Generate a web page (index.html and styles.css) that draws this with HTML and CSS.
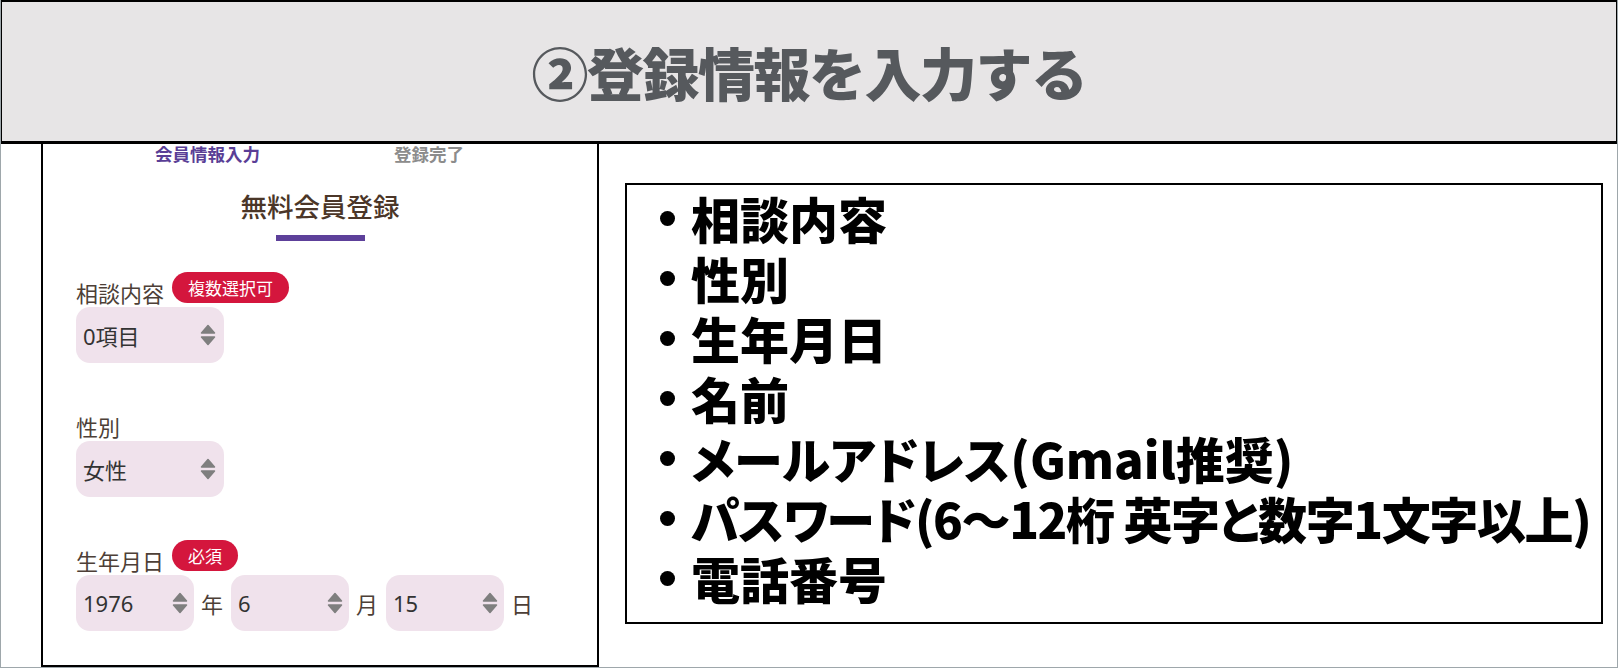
FILE: index.html
```html
<!DOCTYPE html>
<html lang="ja">
<head>
<meta charset="utf-8">
<title>登録情報を入力する</title>
<link rel="stylesheet" href="styles.css">
</head>
<body>
<div class="page">
  <header class="banner"><h1 class="banner-title">②登録情報を入力する</h1></header>
  <div class="content">
    <section class="phone">
      <div class="steps">
        <span class="step step-active">会員情報入力</span>
        <span class="step">登録完了</span>
      </div>
      <h2 class="title">無料会員登録</h2>
      <div class="title-bar"></div>
      <div class="fields">
        <div class="field">
          <div class="label-row"><span class="label">相談内容</span><span class="badge">複数選択可</span></div>
          <div class="select"><span>0項目</span><svg class="updown" width="16" height="22" viewBox="0 0 16 22"><path d="M8 1.5 L14.5 9 H1.5 Z M1.5 13 H14.5 L8 20.5 Z"/></svg></div>
        </div>
        <div class="field">
          <div class="label-row"><span class="label">性別</span></div>
          <div class="select"><span>女性</span><svg class="updown" width="16" height="22" viewBox="0 0 16 22"><path d="M8 1.5 L14.5 9 H1.5 Z M1.5 13 H14.5 L8 20.5 Z"/></svg></div>
        </div>
        <div class="field">
          <div class="label-row"><span class="label">生年月日</span><span class="badge">必須</span></div>
          <div class="date-row">
            <div class="select select-date"><span>1976</span><svg class="updown" width="16" height="22" viewBox="0 0 16 22"><path d="M8 1.5 L14.5 9 H1.5 Z M1.5 13 H14.5 L8 20.5 Z"/></svg></div>
            <span class="unit">年</span>
            <div class="select select-date"><span>6</span><svg class="updown" width="16" height="22" viewBox="0 0 16 22"><path d="M8 1.5 L14.5 9 H1.5 Z M1.5 13 H14.5 L8 20.5 Z"/></svg></div>
            <span class="unit">月</span>
            <div class="select select-date"><span>15</span><svg class="updown" width="16" height="22" viewBox="0 0 16 22"><path d="M8 1.5 L14.5 9 H1.5 Z M1.5 13 H14.5 L8 20.5 Z"/></svg></div>
            <span class="unit">日</span>
          </div>
        </div>
      </div>
    </section>
    <section class="summary">
      <ul class="items">
        <li>相談内容</li>
        <li>性別</li>
        <li>生年月日</li>
        <li>名前</li>
        <li>メールアドレス(Gmail推奨)</li>
        <li class="tight">パスワード(6〜12桁 英字と数字1文字以上)</li>
        <li>電話番号</li>
      </ul>
    </section>
  </div>
</div>
</body>
</html>
```
FILE: styles.css
```css
html, body {
  margin: 0;
  padding: 0;
  background: #ffffff;
}
body {
  font-family: "Noto Sans CJK JP", "Noto Sans", sans-serif;
}
.page {
  width: 1618px;
  height: 668px;
  box-sizing: border-box;
  border: 1px solid #9ea7ab;
  border-top: none;
  display: flex;
  flex-direction: column;
  overflow: hidden;
}
.banner {
  margin: 0 -1px;
  height: 144px;
  flex: 0 0 144px;
  box-sizing: border-box;
  border: 2px solid #000;
  border-bottom-width: 3px;
  background: #e7e5e6;
  display: flex;
  align-items: center;
  justify-content: center;
}
.banner-title {
  margin: 0;
  font-size: 57px;
  line-height: 1;
  font-weight: 900;
  color: #56595d;
  letter-spacing: -1.5px;
}
.content {
  flex: 1;
  display: flex;
  align-items: flex-start;
  min-height: 0;
}
.phone {
  margin-left: 40px;
  width: 558px;
  align-self: stretch;
  box-sizing: border-box;
  border: 2px solid #000;
  border-top: none;
}
.steps {
  display: flex;
  padding-left: 112px;
  gap: 134px;
  font-size: 17.5px;
  line-height: 20px;
  font-weight: 700;
  color: #8c8c8c;
}
.step-active {
  color: #5a3e96;
}
.title {
  margin: 26px 0 0;
  text-align: center;
  font-size: 26.5px;
  line-height: 32px;
  font-weight: 500;
  color: #4b3628;
}
.title-bar {
  width: 89px;
  height: 6px;
  margin: 13px auto 0;
  background: #5d409a;
}
.fields {
  margin-top: 31px;
  padding-left: 33px;
}
.field + .field {
  margin-top: 43px;
}
.label-row {
  display: flex;
  align-items: flex-start;
  gap: 8px;
  height: 35px;
}
.label {
  margin-top: 5px;
  font-size: 22px;
  line-height: 30px;
  color: #4d3f37;
}
.badge {
  height: 31px;
  line-height: 31px;
  padding: 0 16px;
  border-radius: 16px;
  background: #d4163d;
  color: #ffffff;
  font-size: 17px;
}
.select {
  width: 148px;
  height: 56px;
  box-sizing: border-box;
  padding: 0 8px 0 7px;
  border-radius: 14px;
  background: #f0e2ec;
  display: flex;
  align-items: center;
  justify-content: space-between;
  font-family: "Noto Sans", "Noto Sans CJK JP", sans-serif;
  font-size: 22px;
  color: #333333;
}
.updown path {
  fill: #7f7f7f;
  stroke: #7f7f7f;
  stroke-width: 1.5;
  stroke-linejoin: round;
}
.date-row {
  display: flex;
  align-items: center;
  gap: 7px;
}
.select-date {
  width: 118px;
  padding-right: 6px;
}
.unit {
  font-size: 22px;
  color: #4d3f37;
  margin-right: 1px;
}
.summary {
  margin-left: 26px;
  margin-top: 39px;
  width: 978px;
  height: 441px;
  box-sizing: border-box;
  border: 2px solid #000;
  padding: 3px 0 0 33px;
}
.items {
  list-style: none;
  margin: 0;
  padding: 0;
}
.items li {
  display: flex;
  align-items: center;
  height: 60px;
  line-height: 60px;
  font-size: 49px;
  font-weight: 900;
  color: #000;
  font-feature-settings: "palt";
  white-space: nowrap;
}
.items li.tight {
  letter-spacing: -1.4px;
}
.items li::before {
  content: "";
  width: 15px;
  height: 15px;
  border-radius: 50%;
  background: #000;
  margin-right: 16px;
  flex: 0 0 auto;
}
```
